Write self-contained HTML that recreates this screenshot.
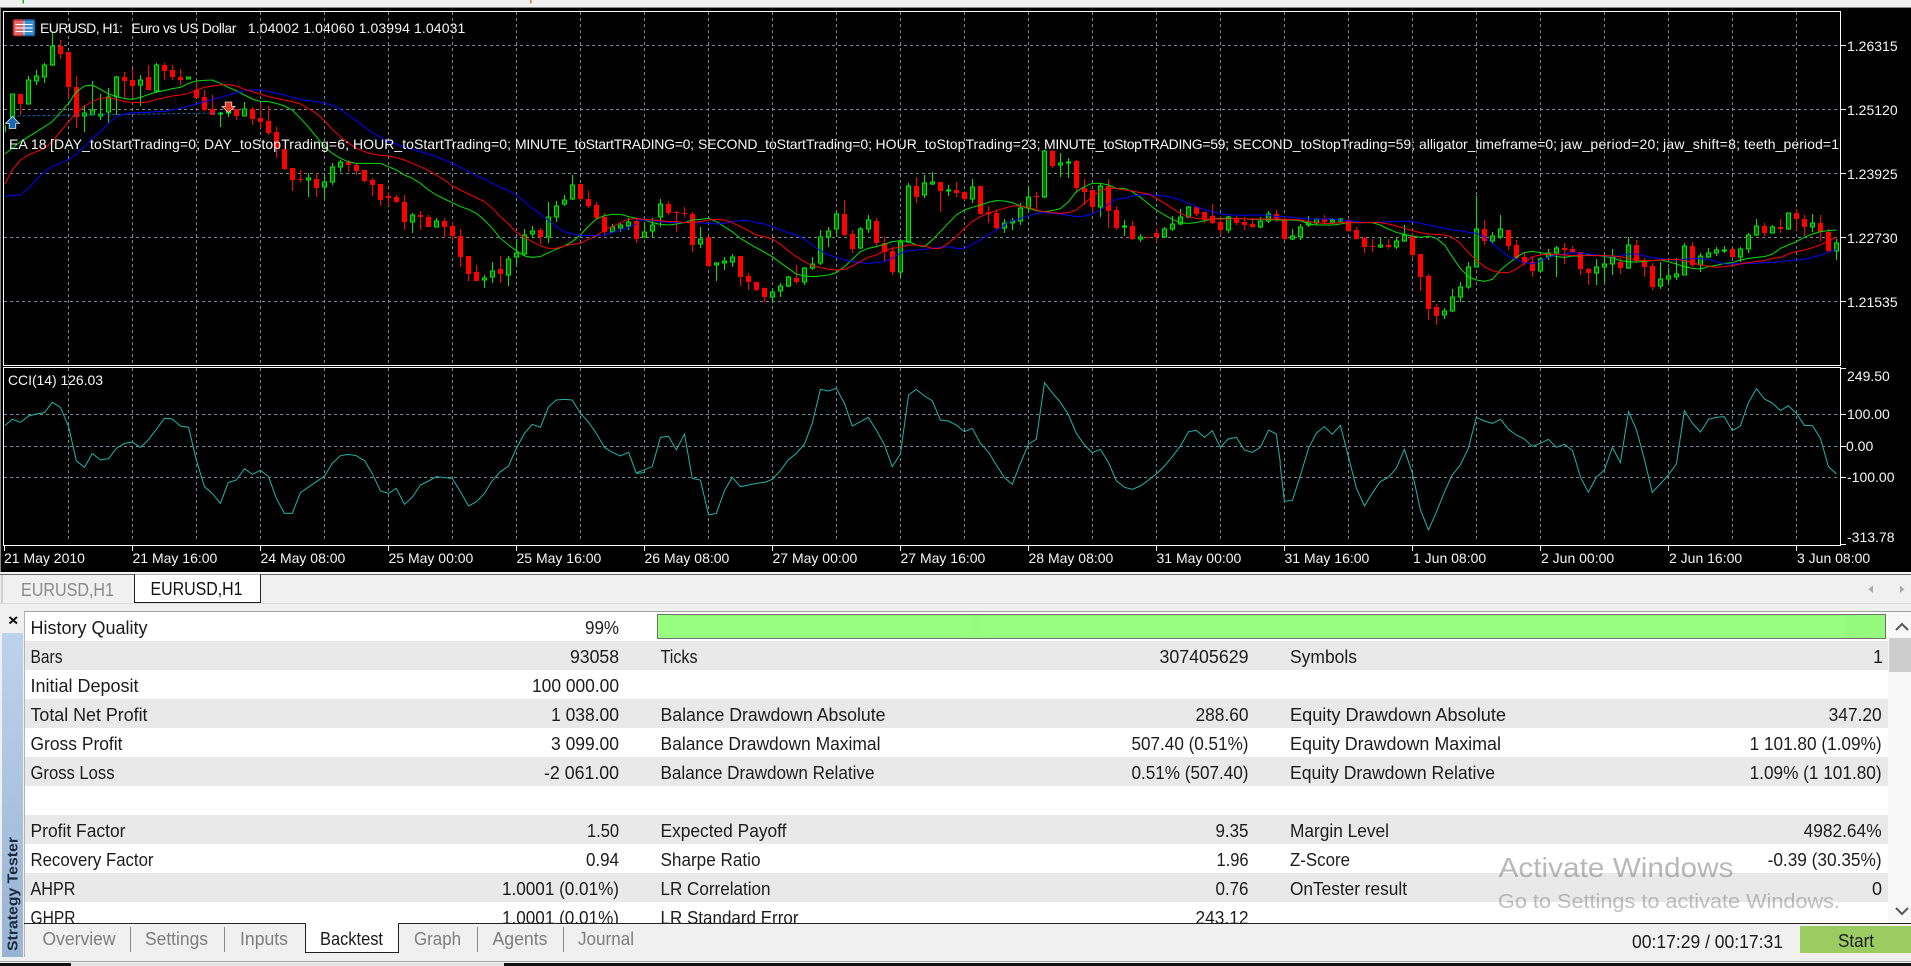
<!DOCTYPE html>
<html lang="en"><head><meta charset="utf-8"><title>EURUSD,H1 Strategy Tester</title>
<style>
html,body{margin:0;padding:0;background:#000;width:1911px;height:966px;overflow:hidden}
svg{display:block;filter:blur(.35px)}
text{font-family:"Liberation Sans",sans-serif;white-space:pre}
.c{font-size:14px;fill:#f6f6f6}
.t{font-size:18px;fill:#1c1c1c}
.e{text-anchor:end}
.g{font-size:18px;fill:#7d7d7d}
.l{fill:none;stroke-width:1;vector-effect:non-scaling-stroke}
</style></head><body>
<svg width="1911" height="966" viewBox="0 0 1911 966" xmlns="http://www.w3.org/2000/svg">
<rect width="1911" height="966" fill="#000"/>
<!-- top strip -->
<rect width="1911" height="7.5" fill="#f0f0f0"/>
<rect y="7" width="1911" height="1" fill="#888"/>
<rect x="22.5" width="1.5" height="3.5" fill="#20b020"/>
<rect x="530" width="1.5" height="3.5" fill="#c08030"/>
<rect x="0" y="8" width="1" height="564" fill="#888"/>

<!-- grid -->
<g stroke="#778899" stroke-width="1" stroke-dasharray="3 3" fill="none">
<path d="M4 45.5H1840M4 109.5H1840M4 173.5H1840M4 237.5H1840M4 301.5H1840"/>
<path d="M4 414.5H1840M4 446.5H1840M4 477.5H1840"/>
<path d="M68.5 12V365M132.5 12V365M196.5 12V365M260.5 12V365M324.5 12V365M388.5 12V365M452.5 12V365M516.5 12V365M580.5 12V365M644.5 12V365M708.5 12V365M772.5 12V365M836.5 12V365M900.5 12V365M964.5 12V365M1028.5 12V365M1092.5 12V365M1156.5 12V365M1220.5 12V365M1284.5 12V365M1348.5 12V365M1412.5 12V365M1476.5 12V365M1540.5 12V365M1604.5 12V365M1668.5 12V365M1732.5 12V365M1796.5 12V365"/>
<path d="M68.5 368V542M132.5 368V542M196.5 368V542M260.5 368V542M324.5 368V542M388.5 368V542M452.5 368V542M516.5 368V542M580.5 368V542M644.5 368V542M708.5 368V542M772.5 368V542M836.5 368V542M900.5 368V542M964.5 368V542M1028.5 368V542M1092.5 368V542M1156.5 368V542M1220.5 368V542M1284.5 368V542M1348.5 368V542M1412.5 368V542M1476.5 368V542M1540.5 368V542M1604.5 368V542M1668.5 368V542M1732.5 368V542M1796.5 368V542"/>
</g>

<!-- red wicks -->
<path fill="none" stroke="#f00" stroke-width="1" d="M20.5 94V115M60.5 40V59M68.5 52V98M76.5 76V128M124.5 72V98M132.5 69V98M148.5 65V90M164.5 63V80M172.5 65V80M180.5 69V86M196.5 82V98M204.5 90V111M212.5 95V115M236.5 109V120M252.5 107V125M260.5 103V128M268.5 106V135M276.5 127V158M284.5 149V170M292.5 168V191M300.5 170V182M316.5 173V197M348.5 160V172M356.5 163V175M364.5 170V182M372.5 178V196M380.5 184V206M388.5 192V206M396.5 195V203M404.5 195V230M420.5 211V230M428.5 215V227M444.5 218V238M452.5 222V241M460.5 229V267M468.5 256V281M476.5 265V281M500.5 256V283M540.5 228V244M580.5 184V200M588.5 191V208M596.5 202V220M604.5 213V235M636.5 218V243M668.5 201V215M676.5 211V232M684.5 207V217M692.5 212V252M708.5 237V267M740.5 256V286M748.5 273V290M756.5 282V291M764.5 288V302M796.5 265V284M844.5 200V236M852.5 230V253M876.5 218V246M884.5 237V262M892.5 247V275M916.5 177V203M940.5 182V212M956.5 182V197M964.5 191V200M980.5 186V215M988.5 206V223M996.5 211V230M1036.5 192V209M1052.5 150V168M1076.5 160V193M1084.5 179V205M1092.5 190V212M1108.5 179V228M1116.5 206V230M1132.5 221V240M1156.5 228V242M1196.5 207V216M1204.5 212V223M1212.5 204V224M1220.5 216V235M1236.5 216V225M1244.5 217V230M1252.5 218V228M1276.5 210V222M1284.5 216V240M1324.5 215V224M1348.5 218V232M1356.5 227V239M1364.5 237V253M1372.5 239V252M1388.5 239V249M1412.5 233V259M1420.5 254V291M1428.5 274V320M1436.5 304V325M1484.5 220V245M1508.5 230V250M1516.5 240V259M1524.5 253V265M1532.5 257V277M1564.5 243V264M1572.5 246V253M1580.5 252V275M1588.5 268V285M1620.5 258V274M1636.5 240V263M1644.5 258V277M1652.5 263V290M1692.5 242V267M1732.5 249V258M1764.5 223V236M1780.5 219V233M1796.5 209V230M1804.5 215V236M1820.5 215V241M1828.5 229V252"/>
<!-- red bodies -->
<path fill="none" stroke="#f00" stroke-width="5" d="M20.5 94V104M60.5 46V54M68.5 52V87M76.5 87V117M124.5 77V81M132.5 80V86M148.5 77V90M164.5 65V71M172.5 70V77M180.5 77V80M196.5 90V98M204.5 97V110M212.5 109V115M236.5 109V116M252.5 109V119M260.5 118V122M268.5 121V133M276.5 132V149M284.5 149V169M292.5 168V180M300.5 179V180M316.5 179V188M348.5 162V165M356.5 165V171M364.5 170V181M372.5 180V185M380.5 184V200M388.5 196V198M396.5 197V202M404.5 202V222M420.5 215V217M428.5 217V227M444.5 221V227M452.5 226V236M460.5 236V257M468.5 256V274M476.5 272V281M500.5 269V274M540.5 230V237M580.5 184V199M588.5 199V206M596.5 205V218M604.5 217V232M636.5 221V239M668.5 204V213M676.5 212V213M684.5 213V214M692.5 214V245M708.5 237V266M740.5 256V277M748.5 276V282M756.5 282V290M764.5 288V297M796.5 278V282M844.5 214V235M852.5 234V249M876.5 221V243M884.5 243V252M892.5 251V272M916.5 186V197M940.5 182V191M956.5 190V193M964.5 192V199M980.5 186V214M988.5 212V214M996.5 213V228M1036.5 196V197M1052.5 151V166M1076.5 161V188M1084.5 188V192M1092.5 190V207M1108.5 186V211M1116.5 210V228M1132.5 226V239M1148.5 237V238M1156.5 233V237M1196.5 207V214M1204.5 212V219M1212.5 216V223M1220.5 222V230M1236.5 219V223M1244.5 222V225M1252.5 224V227M1276.5 214V220M1284.5 220V239M1324.5 219V222M1348.5 220V231M1356.5 230V239M1364.5 238V247M1372.5 246V247M1388.5 245V247M1412.5 236V255M1420.5 254V277M1428.5 276V309M1436.5 307V316M1484.5 229V241M1508.5 230V246M1516.5 245V258M1524.5 257V263M1532.5 262V271M1564.5 248V250M1572.5 249V252M1580.5 252V269M1588.5 269V273M1620.5 262V268M1636.5 245V261M1644.5 261V267M1652.5 266V287M1692.5 246V265M1732.5 249V257M1764.5 226V233M1780.5 227V229M1796.5 213V219M1804.5 219V227M1820.5 223V232M1828.5 232V251"/>
<!-- green wicks -->
<path fill="none" stroke="#00e800" stroke-width="1" d="M12.5 94V118M28.5 76V104M36.5 70V85M44.5 63V83M52.5 33V66M84.5 105V132M92.5 81V115M100.5 94V120M108.5 88V123M116.5 76V115M140.5 75V106M156.5 63V93M220.5 112V127M228.5 107V117M244.5 102V116M308.5 173V197M324.5 175V199M332.5 163V185M340.5 160V172M412.5 213V233M436.5 218V227M484.5 275V288M492.5 262V283M508.5 256V286M516.5 239V265M524.5 229V256M532.5 226V238M548.5 202V243M556.5 201V222M564.5 195V206M572.5 175V200M612.5 224V233M620.5 223V232M628.5 218V230M644.5 222V238M652.5 218V237M660.5 199V227M700.5 227V248M716.5 262V281M724.5 257V270M732.5 254V267M772.5 288V302M780.5 283V297M788.5 276V287M804.5 267V285M812.5 257V270M820.5 230V265M828.5 227V247M836.5 211V237M860.5 227V249M868.5 215V233M900.5 239V277M908.5 183V243M924.5 175V198M932.5 172V185M948.5 185V196M972.5 179V203M1004.5 219V233M1012.5 218V230M1020.5 203V225M1028.5 186V212M1044.5 150V198M1060.5 153V177M1068.5 158V178M1100.5 183V217M1124.5 220V236M1140.5 234V242M1164.5 227V237M1172.5 216V231M1180.5 209V225M1188.5 206V218M1228.5 216V233M1260.5 217V228M1268.5 211V223M1292.5 229V240M1300.5 224V240M1308.5 216V227M1316.5 218V225M1332.5 218V223M1340.5 218V222M1380.5 237V248M1396.5 237V249M1404.5 225V242M1444.5 308V319M1452.5 289V312M1460.5 282V302M1468.5 262V289M1476.5 196V267M1492.5 232V243M1500.5 215V239M1540.5 257V272M1548.5 249V260M1556.5 246V277M1596.5 259V285M1604.5 255V283M1612.5 249V275M1628.5 237V269M1660.5 262V289M1668.5 268V285M1676.5 258V280M1684.5 243V275M1700.5 253V272M1708.5 248V258M1716.5 247V256M1724.5 246V253M1740.5 247V262M1748.5 233V253M1756.5 219V236M1772.5 225V233M1788.5 213V230M1812.5 214V232M1836.5 239V260M5.5 125V132"/>
<!-- green bodies -->
<path fill="#006a00" stroke="#00e800" stroke-width="1" d="M10.5 94h4v23h-4zM26.5 80h4v24h-4zM34.5 76h4v5h-4zM42.5 65h4v12h-4zM50.5 46h4v19h-4zM82.5 113h4v3h-4zM90.5 110h4v5h-4zM98.5 114h4v2h-4zM106.5 97h4v15h-4zM114.5 77h4v20h-4zM138.5 80h4v5h-4zM154.5 65h4v26h-4zM186.5 77h4v2h-4zM218.5 113h4v1h-4zM226.5 110h4v3h-4zM242.5 109h4v7h-4zM306.5 178h4v2h-4zM322.5 182h4v5h-4zM330.5 167h4v15h-4zM338.5 162h4v5h-4zM410.5 215h4v7h-4zM434.5 221h4v6h-4zM482.5 278h4v2h-4zM490.5 271h4v6h-4zM506.5 259h4v16h-4zM514.5 253h4v4h-4zM522.5 235h4v19h-4zM530.5 231h4v3h-4zM546.5 217h4v20h-4zM554.5 206h4v11h-4zM562.5 200h4v4h-4zM570.5 185h4v14h-4zM610.5 227h4v5h-4zM618.5 225h4v3h-4zM626.5 222h4v4h-4zM642.5 232h4v5h-4zM650.5 225h4v6h-4zM658.5 204h4v13h-4zM698.5 239h4v5h-4zM714.5 263h4v2h-4zM722.5 261h4v2h-4zM730.5 257h4v5h-4zM770.5 292h4v5h-4zM778.5 286h4v5h-4zM786.5 277h4v9h-4zM802.5 268h4v14h-4zM810.5 264h4v4h-4zM818.5 237h4v26h-4zM826.5 231h4v6h-4zM834.5 214h4v15h-4zM858.5 229h4v19h-4zM866.5 220h4v9h-4zM898.5 242h4v30h-4zM906.5 186h4v56h-4zM922.5 183h4v12h-4zM930.5 182h4v2h-4zM946.5 190h4v1h-4zM970.5 187h4v12h-4zM1002.5 223h4v5h-4zM1010.5 221h4v2h-4zM1018.5 208h4v13h-4zM1026.5 197h4v11h-4zM1042.5 151h4v46h-4zM1058.5 163h4v2h-4zM1066.5 162h4v1h-4zM1098.5 186h4v21h-4zM1122.5 226h4v1h-4zM1138.5 237h4v2h-4zM1162.5 229h4v8h-4zM1170.5 224h4v5h-4zM1178.5 217h4v7h-4zM1186.5 207h4v10h-4zM1226.5 217h4v13h-4zM1258.5 221h4v6h-4zM1266.5 214h4v7h-4zM1290.5 236h4v3h-4zM1298.5 227h4v10h-4zM1306.5 222h4v3h-4zM1314.5 219h4v4h-4zM1330.5 220h4v2h-4zM1338.5 219h4v2h-4zM1378.5 245h4v2h-4zM1394.5 241h4v6h-4zM1402.5 235h4v6h-4zM1442.5 311h4v4h-4zM1450.5 297h4v14h-4zM1458.5 287h4v10h-4zM1466.5 267h4v20h-4zM1474.5 229h4v38h-4zM1490.5 236h4v5h-4zM1498.5 229h4v8h-4zM1538.5 259h4v12h-4zM1546.5 253h4v4h-4zM1554.5 248h4v5h-4zM1594.5 267h4v6h-4zM1602.5 264h4v3h-4zM1610.5 257h4v7h-4zM1626.5 245h4v23h-4zM1658.5 279h4v7h-4zM1666.5 276h4v3h-4zM1674.5 274h4v3h-4zM1682.5 246h4v29h-4zM1698.5 256h4v9h-4zM1706.5 253h4v4h-4zM1714.5 250h4v3h-4zM1722.5 250h4v1h-4zM1738.5 249h4v8h-4zM1746.5 235h4v14h-4zM1754.5 226h4v9h-4zM1770.5 227h4v6h-4zM1786.5 213h4v16h-4zM1810.5 223h4v4h-4zM1834.5 243h4v8h-4z"/>

<!-- trade link -->
<path d="M12.5 116L220 113" fill="none" stroke="#1565a8" stroke-width="1" stroke-dasharray="3 2"/>

<!-- moving averages section 1 -->
<g transform="scale(.40816,.33333)">
<polyline class="l" stroke="#00e000" points="12,462 50,425 90,395 128,365 168,310 187,275 207,258 226,255 246,268 266,282 285,290 305,296 324,298 344,292 363,284 383,276 403,272 422,266 442,262 462,250 481,243 500,241 520,240 540,250 559,262 579,272 599,285 618,297 638,304 658,305 677,310 697,318 716,330 736,355 755,380 775,410 795,440 814,460 834,475 853,485 873,490 893,490 912,490 932,490 952,500 971,510 991,525 1010,535 1030,550 1050,570 1069,585 1089,597 1108,608 1128,620 1148,628 1167,640 1187,660 1206,685 1226,715 1246,735 1265,752 1285,768 1304,772 1324,770 1344,758 1363,748 1383,738 1402,725 1422,705 1441,680 1461,657 1481,647 1500,643 1520,643 1540,650 1559,655"/>
<polyline class="l" stroke="#0000ff" points="12,590 30,586 50,585 70,565 89,540 109,515 128,500 148,490 168,478 187,462 207,440 226,415 246,395 266,370 285,350 305,342 324,338 344,337 363,337 383,335 403,335 422,330 442,325 462,318 481,312 501,305 520,298 540,292 559,285 579,278 599,272 618,270 638,270 658,274 677,280 697,285 716,292 736,298 755,302 775,305 795,310 814,315 834,328 853,345 873,362 893,380 912,398 932,412 952,425 971,432 991,442 1010,448 1030,455 1050,462 1069,470 1089,480 1108,490 1128,502 1148,515 1167,527 1187,537 1206,550 1226,562 1246,572 1265,585 1285,605 1304,625 1324,643 1344,662 1363,680 1383,695 1402,702 1422,706 1441,707 1461,707 1481,705 1500,698 1520,690 1540,682 1559,672"/>
<polyline class="l" stroke="#f00" points="12,552 30,510 50,480 70,465 89,455 109,445 128,425 148,395 168,365 187,340 207,318 226,305 246,295 266,293 285,298 305,305 324,307 344,308 363,306 383,298 403,293 422,288 442,285 462,280 481,270 501,262 520,258 540,255 559,254 579,258 599,268 618,275 638,282 658,290 677,295 697,300 716,305 736,312 755,325 775,340 795,362 814,388 834,410 853,428 873,445 893,455 912,462 932,466 952,468 971,473 991,480 1010,490 1030,500 1050,512 1069,525 1089,540 1108,558 1128,570 1148,582 1167,593 1187,605 1206,625 1226,650 1246,672 1265,697 1285,712 1304,725 1324,737 1344,745 1363,745 1383,738 1402,733 1422,730 1441,718 1461,708 1481,690 1500,680 1520,668 1540,658 1559,655"/>
</g>
<!-- section 2 -->
<g transform="translate(640,0) scale(.40816,.33333)">
<polyline class="l" stroke="#00e000" points="-8,655 11,660 30,668 50,673 70,675 89,672 109,668 128,660 148,658 168,655 187,665 207,680 226,695 246,715 266,730 285,743 305,757 324,770 344,788 363,805 383,822 403,828 422,830 442,828 462,825 481,818 501,800 520,778 540,755 559,745 579,740 599,733 618,725 638,722 658,725 677,735 697,740 716,720 736,695 755,670 775,645 795,630 814,622 834,615 853,607 873,602 893,603 912,608 932,618 952,625 971,632 991,635 1010,632 1030,626 1050,605 1069,575 1089,560 1108,550 1128,550 1148,555 1167,565 1187,565 1206,575 1226,592 1246,612 1265,630 1285,645 1304,658 1324,668 1344,670 1363,668 1383,662 1402,657 1422,655 1441,655 1461,655 1481,657 1500,658 1520,658 1540,658 1559,660"/>
<polyline class="l" stroke="#0000ff" points="-8,660 11,660 30,662 50,664 70,667 89,668 109,668 128,668 148,668 168,670 187,672 207,670 226,665 246,662 266,662 285,668 305,672 324,680 344,690 363,698 383,705 403,718 422,735 442,752 462,765 481,772 501,780 520,785 540,788 559,790 579,788 599,785 618,775 638,760 658,752 677,750 697,748 716,745 736,742 755,740 775,745 795,745 814,733 834,720 853,705 873,690 893,675 912,662 932,655 952,648 971,640 991,638 1010,640 1030,642 1050,646 1069,650 1089,648 1108,642 1128,630 1148,612 1167,598 1187,595 1206,588 1226,585 1246,583 1265,586 1285,588 1304,592 1324,600 1344,610 1363,620 1383,630 1402,635 1422,642 1441,645 1461,645 1481,646 1500,645 1520,645 1540,645 1559,650"/>
<polyline class="l" stroke="#f00" points="-8,655 11,658 30,660 50,662 70,665 89,665 109,668 128,668 148,665 168,660 187,658 207,660 226,668 246,680 266,692 285,705 305,710 324,717 344,733 363,752 383,770 403,785 422,797 442,803 462,808 481,810 501,808 520,798 540,785 559,772 579,765 599,752 618,745 638,742 658,735 677,735 697,738 716,745 736,745 755,730 775,710 795,685 814,665 834,650 853,640 873,632 893,625 912,618 932,618 952,622 971,630 991,635 1010,638 1030,640 1050,638 1069,630 1089,610 1108,590 1128,572 1148,565 1167,565 1187,570 1206,573 1226,578 1246,582 1265,595 1285,610 1304,625 1324,640 1344,650 1363,655 1383,658 1402,657 1422,657 1441,657 1461,655 1481,657 1500,657 1520,657 1540,657 1559,658"/>
</g>
<!-- section 3 -->
<g transform="translate(1280,0) scale(.40241,.33333)">
<polyline class="l" stroke="#00e000" points="-9,660 11,660 31,660 51,662 71,672 90,675 110,675 130,675 150,672 170,668 190,668 210,668 229,668 249,675 269,687 289,697 309,703 329,708 349,712 369,708 389,715 409,735 428,770 448,805 468,830 488,840 508,844 528,838 548,810 568,790 587,772 607,758 627,754 647,758 667,762 687,770 707,772 727,768 747,768 766,765 786,765 806,770 826,772 846,782 866,785 886,786 906,784 925,782 945,780 965,785 985,792 1005,800 1025,805 1045,807 1065,800 1084,796 1104,790 1124,788 1144,780 1164,775 1184,772 1204,770 1224,762 1244,745 1263,735 1283,725 1303,712 1323,702 1343,695 1363,692 1383,690"/>
<polyline class="l" stroke="#0000ff" points="-9,650 11,650 31,652 51,655 71,657 90,657 110,657 130,657 150,660 170,662 190,665 210,667 229,667 249,667 269,665 289,665 309,663 329,665 349,670 369,675 389,680 409,685 428,690 448,692 468,697 488,700 508,710 528,730 548,750 568,770 587,778 607,788 627,792 647,782 667,772 687,765 707,762 727,758 747,760 766,762 786,765 806,768 826,770 846,768 866,762 886,762 906,768 925,773 945,776 965,778 985,780 1005,778 1025,776 1045,776 1065,778 1084,785 1104,792 1124,792 1144,790 1164,790 1184,790 1204,788 1224,788 1244,785 1263,782 1283,780 1303,778 1323,772 1343,765 1363,757 1383,748"/>
<polyline class="l" stroke="#f00" points="-9,657 11,658 31,658 51,660 71,665 90,668 110,670 130,670 150,668 170,668 190,668 210,668 229,667 249,668 269,672 289,678 309,685 329,692 349,698 369,702 389,703 409,705 428,712 448,730 468,758 488,780 508,800 528,812 548,818 568,818 587,808 607,790 627,770 647,765 667,762 687,763 707,765 727,766 747,767 766,767 786,767 806,767 826,768 846,770 866,775 886,780 906,782 925,782 945,780 965,778 985,778 1005,782 1025,788 1045,795 1065,798 1084,802 1104,800 1124,797 1144,792 1164,788 1184,785 1204,782 1224,775 1244,772 1263,762 1283,755 1303,750 1323,743 1343,735 1363,722 1383,712"/>
</g>

<!-- CCI line -->
<g transform="translate(0,360) scale(.40816,.33333)">
<polyline class="l" stroke="#20b2aa" points="12,197 30,178 50,187 70,168 89,162 109,158 128,127 148,142 168,200 187,302 207,322 226,280 246,300 266,296 285,265 305,250 324,246 344,262 363,240 383,208 403,175 422,177 442,198 462,202 481,300 501,380 520,400 540,430 559,368 579,360 599,326 618,343 638,331 658,350 677,415 697,460 716,460 736,398 755,382 775,365 795,348 814,310 834,287 853,283 873,287 893,302 912,340 932,393 952,400 971,385 991,433 1010,412 1030,375 1050,363 1069,350 1089,353 1108,355 1128,395 1148,438 1167,425 1187,400 1206,362 1226,335 1246,318 1265,265 1285,220 1304,193 1324,202 1344,140 1363,120 1383,118 1402,120 1422,160 1441,185 1461,220 1481,262 1500,277 1520,288 1540,277 1559,340 1579,338"/>
</g>
<g transform="translate(640,360) scale(.40816,.33333)">
<polyline class="l" stroke="#20b2aa" points="-8,338 11,329 30,320 50,232 70,229 89,270 109,222 128,355 148,360 168,465 187,460 207,392 226,352 246,380 266,375 285,370 305,367 324,358 344,332 363,300 383,280 403,252 422,190 442,88 462,93 481,85 501,130 520,198 540,185 559,172 579,210 599,255 618,320 638,282 658,105 677,88 697,108 716,122 736,180 755,183 775,195 795,215 814,205 834,250 853,275 873,315 893,353 912,373 932,310 952,252 971,238 991,68 1010,98 1030,127 1050,165 1069,220 1089,255 1108,278 1128,268 1148,308 1167,362 1187,382 1206,388 1226,378 1246,360 1265,342 1285,318 1304,290 1324,258 1344,215 1363,211 1383,232 1402,212 1422,262 1441,237 1461,232 1481,270 1500,277 1520,262 1540,210 1559,222 1569,310"/>
</g>
<g transform="translate(1280,360) scale(.40241,.33333)">
<polyline class="l" stroke="#20b2aa" points="0,310 11,424 31,421 51,345 71,265 90,220 110,200 130,223 150,196 170,290 190,385 210,438 229,400 249,365 269,352 289,325 309,268 329,340 349,450 369,510 389,455 409,395 428,345 448,315 468,265 488,172 508,183 528,190 548,178 568,208 587,225 607,237 627,259 647,250 667,238 687,262 707,253 727,272 747,352 766,397 786,352 806,330 826,262 846,308 866,155 886,210 906,300 925,397 945,372 965,345 985,312 1005,152 1025,190 1045,216 1065,178 1084,172 1104,170 1124,212 1144,198 1164,128 1184,86 1204,117 1224,130 1244,152 1263,137 1283,160 1303,196 1323,197 1343,235 1363,320 1383,342"/>
</g>

<!-- arrows -->
<path d="M12.5 116.5L19.5 123.5H15.800V128.500H9.200V123.500H5.500Z" fill="#1668b4" stroke="#e8e8e8" stroke-width=".8"/>
<path d="M228.5 112.500L235 106.500H231.800V102H225.200V106.500H222Z" fill="#e03a20" stroke="#e8d8d0" stroke-width=".8"/>

<!-- window borders -->
<path d="M3.5 11.5H1840.5V365.5H3.5Z" fill="none" stroke="#fff" stroke-width="1"/>
<path d="M3.5 367.5H1840.5V545.5H3.5Z" fill="none" stroke="#fff" stroke-width="1"/>
<!-- ticks -->
<path stroke="#fff" stroke-width="1" fill="none" d="M1841 45.5h5M1841 109.5h5M1841 173.5h5M1841 237.5h5M1841 301.5h5M1841 368.5h5M1841 414.5h5M1841 446.5h5M1841 477.5h5M1841 544.5h5M4.5 546v5M132.5 546v5M260.5 546v5M388.5 546v5M516.5 546v5M644.5 546v5M772.5 546v5M900.5 546v5M1028.5 546v5M1156.5 546v5M1284.5 546v5M1412.5 546v5M1540.5 546v5M1668.5 546v5M1796.5 546v5"/>

<!-- flag icon -->
<rect x="13" y="19.5" width="22" height="16.5" rx="2" fill="#fff"/>
<path d="M24 20H15q-1.500 0-1.500 1.500V34q0 1.500 1.500 1.500H24Z" fill="#e06a6a" stroke="#cc3030" stroke-width="1.500"/>
<path d="M24 20H33q1.500 0 1.500 1.500V34q0 1.500-1.500 1.500H24Z" fill="#3f8fcc" stroke="#1565a8" stroke-width="1.500"/>
<path d="M15.500 24.500H32.500M15.500 28H32.500M15.500 31.500H32.500" stroke="#fff" stroke-width="1"/>
<path d="M24 21V35" stroke="#fff" stroke-width="1"/>

<!-- chart labels -->
<text class="c" x="40" y="33" textLength="83" lengthAdjust="spacing">EURUSD, H1:</text>
<text class="c" x="131.400" y="33" textLength="105" lengthAdjust="spacing">Euro vs US Dollar</text>
<text class="c" x="247.800" y="33" textLength="217.500" lengthAdjust="spacing">1.04002 1.04060 1.03994 1.04031</text>
<text class="c" x="9" y="149" textLength="37.500" lengthAdjust="spacing">EA 18</text>
<text class="c" x="50" y="149" textLength="150" lengthAdjust="spacing">[DAY_toStartTrading=0;</text>
<text class="c" x="204" y="149" textLength="145" lengthAdjust="spacing">DAY_toStopTrading=6;</text>
<text class="c" x="353" y="149" textLength="158" lengthAdjust="spacing">HOUR_toStartTrading=0;</text>
<text class="c" x="515" y="149" textLength="179" lengthAdjust="spacing">MINUTE_toStartTRADING=0;</text>
<text class="c" x="698" y="149" textLength="174" lengthAdjust="spacing">SECOND_toStartTrading=0;</text>
<text class="c" x="875.500" y="149" textLength="165" lengthAdjust="spacing">HOUR_toStopTrading=23;</text>
<text class="c" x="1044" y="149" textLength="185" lengthAdjust="spacing">MINUTE_toStopTRADING=59;</text>
<text class="c" x="1233" y="149" textLength="182" lengthAdjust="spacing">SECOND_toStopTrading=59;</text>
<text class="c" x="1419" y="149" textLength="138" lengthAdjust="spacing">alligator_timeframe=0;</text>
<text class="c" x="1560.500" y="149" textLength="99" lengthAdjust="spacing">jaw_period=20;</text>
<text class="c" x="1663" y="149" textLength="77" lengthAdjust="spacing">jaw_shift=8;</text>
<text class="c" x="1744" y="149" textLength="95" lengthAdjust="spacing">teeth_period=1</text>
<text class="c" x="8" y="385" textLength="95">CCI(14) 126.03</text>
<text class="c" x="1847" y="51">1.26315</text>
<text class="c" x="1847" y="115">1.25120</text>
<text class="c" x="1847" y="179">1.23925</text>
<text class="c" x="1847" y="243">1.22730</text>
<text class="c" x="1847" y="307">1.21535</text>
<text class="c" x="1847" y="381">249.50</text>
<text class="c" x="1847" y="419">100.00</text>
<text class="c" x="1846" y="451">0.00</text>
<text class="c" x="1847" y="482">-100.00</text>
<text class="c" x="1847" y="542">-313.78</text>
<g class="tm">
<text class="c" x="4" y="563">21 May 2010</text>
<text class="c" x="132.500" y="563">21 May 16:00</text>
<text class="c" x="260.500" y="563">24 May 08:00</text>
<text class="c" x="388.500" y="563">25 May 00:00</text>
<text class="c" x="516.500" y="563">25 May 16:00</text>
<text class="c" x="644.500" y="563">26 May 08:00</text>
<text class="c" x="772.500" y="563">27 May 00:00</text>
<text class="c" x="900.500" y="563">27 May 16:00</text>
<text class="c" x="1028.500" y="563">28 May 08:00</text>
<text class="c" x="1156.500" y="563">31 May 00:00</text>
<text class="c" x="1284.500" y="563">31 May 16:00</text>
<text class="c" x="1413" y="563">1 Jun 08:00</text>
<text class="c" x="1541" y="563">2 Jun 00:00</text>
<text class="c" x="1669" y="563">2 Jun 16:00</text>
<text class="c" x="1797" y="563">3 Jun 08:00</text>
</g>

<!-- lower area background -->
<rect x="0" y="572" width="1911" height="394" fill="#f0f0f0"/>
<rect x="0" y="572" width="1911" height="1.500" fill="#f4f4f4"/>
<rect x="0" y="574" width="1911" height="1" fill="#666"/>
<rect x="0" y="603" width="1911" height="1" fill="#dcdcdc"/>
<!-- chart tabs -->
<path d="M134.500 574.500V602.500H260.500V574.500" fill="#fff" stroke="#222" stroke-width="1"/>
<rect x="1.500" y="575" width="1" height="28" fill="#b0b0b0"/>
<text x="21" y="596" font-size="18" fill="#8a8a8a" textLength="93" lengthAdjust="spacingAndGlyphs">EURUSD,H1</text>
<text x="150.500" y="595" font-size="18" fill="#111" textLength="92" lengthAdjust="spacingAndGlyphs">EURUSD,H1</text>
<path d="M1873 585.500V593L1868.500 589.200Z" fill="#aaa"/>
<path d="M1900 585.500V593L1904.500 589.200Z" fill="#aaa"/>

<!-- tester panel -->
<rect x="24" y="612" width="1864" height="311" fill="#fff"/>
<rect x="24" y="611" width="1887" height="1" fill="#a0a0a0"/>
<rect x="24" y="612" width="1" height="311" fill="#b4b4b4"/>
<path d="M9.500 617L17 623.500M17 617L9.500 623.500" stroke="#111" stroke-width="2" fill="none"/>
<defs><linearGradient id="sb" x1="0" y1="0" x2="0" y2="1"><stop offset="0" stop-color="#bdd3ec"/><stop offset="1" stop-color="#98b4d4"/></linearGradient>
<clipPath id="tc"><rect x="24" y="612" width="1864" height="311"/></clipPath></defs>
<rect x="2" y="633" width="21" height="324" fill="url(#sb)"/>
<text transform="translate(17.500,951) rotate(-90)" font-size="15" font-weight="bold" fill="#1a2a3a" textLength="114" lengthAdjust="spacingAndGlyphs">Strategy Tester</text>

<g clip-path="url(#tc)">
<g fill="#e9e9e9">
<rect x="25" y="641" width="1863" height="29"/>
<rect x="25" y="699" width="1863" height="29"/>
<rect x="25" y="757" width="1863" height="29"/>
<rect x="25" y="815" width="1863" height="29"/>
<rect x="25" y="873" width="1863" height="29"/>
</g>
<rect x="657.500" y="614.500" width="1228" height="24" fill="#98fe80" stroke="#707070" stroke-width="1"/>
<rect x="970" y="615" width="12" height="23" fill="#96fb7f"/>
<rect x="1845" y="615" width="40" height="23" fill="#95f97e"/>

<g>
<text class="t" x="30.500" y="634" textLength="117" lengthAdjust="spacingAndGlyphs">History Quality</text>
<text class="t" x="30.500" y="663" textLength="32" lengthAdjust="spacingAndGlyphs">Bars</text>
<text class="t" x="30.500" y="692" textLength="108" lengthAdjust="spacingAndGlyphs">Initial Deposit</text>
<text class="t" x="30.500" y="721" textLength="117" lengthAdjust="spacingAndGlyphs">Total Net Profit</text>
<text class="t" x="30.500" y="750" textLength="92" lengthAdjust="spacingAndGlyphs">Gross Profit</text>
<text class="t" x="30.500" y="779" textLength="84" lengthAdjust="spacingAndGlyphs">Gross Loss</text>
<text class="t" x="30.500" y="837" textLength="95" lengthAdjust="spacingAndGlyphs">Profit Factor</text>
<text class="t" x="30.500" y="866" textLength="123" lengthAdjust="spacingAndGlyphs">Recovery Factor</text>
<text class="t" x="30.500" y="895" textLength="45" lengthAdjust="spacingAndGlyphs">AHPR</text>
<text class="t" x="30.500" y="924" textLength="45" lengthAdjust="spacingAndGlyphs">GHPR</text>

<text class="t" x="585" y="634" textLength="34" lengthAdjust="spacingAndGlyphs">99%</text>
<text class="t" x="570" y="663" textLength="49" lengthAdjust="spacingAndGlyphs">93058</text>
<text class="t" x="532" y="692" textLength="87" lengthAdjust="spacingAndGlyphs">100 000.00</text>
<text class="t" x="551" y="721" textLength="68" lengthAdjust="spacingAndGlyphs">1 038.00</text>
<text class="t" x="551" y="750" textLength="68" lengthAdjust="spacingAndGlyphs">3 099.00</text>
<text class="t" x="544" y="779" textLength="75" lengthAdjust="spacingAndGlyphs">-2 061.00</text>
<text class="t" x="587" y="837" textLength="32" lengthAdjust="spacingAndGlyphs">1.50</text>
<text class="t" x="586" y="866" textLength="33" lengthAdjust="spacingAndGlyphs">0.94</text>
<text class="t" x="502" y="895" textLength="117" lengthAdjust="spacingAndGlyphs">1.0001 (0.01%)</text>
<text class="t" x="502" y="924" textLength="117" lengthAdjust="spacingAndGlyphs">1.0001 (0.01%)</text>

<text class="t" x="660.500" y="663" textLength="37" lengthAdjust="spacingAndGlyphs">Ticks</text>
<text class="t" x="660.500" y="721" textLength="225" lengthAdjust="spacingAndGlyphs">Balance Drawdown Absolute</text>
<text class="t" x="660.500" y="750" textLength="220" lengthAdjust="spacingAndGlyphs">Balance Drawdown Maximal</text>
<text class="t" x="660.500" y="779" textLength="214" lengthAdjust="spacingAndGlyphs">Balance Drawdown Relative</text>
<text class="t" x="660.500" y="837" textLength="126" lengthAdjust="spacingAndGlyphs">Expected Payoff</text>
<text class="t" x="660.500" y="866" textLength="100" lengthAdjust="spacingAndGlyphs">Sharpe Ratio</text>
<text class="t" x="660.500" y="895" textLength="110" lengthAdjust="spacingAndGlyphs">LR Correlation</text>
<text class="t" x="660.500" y="924" textLength="138" lengthAdjust="spacingAndGlyphs">LR Standard Error</text>

<text class="t" x="1159.500" y="663" textLength="89" lengthAdjust="spacingAndGlyphs">307405629</text>
<text class="t" x="1195.500" y="721" textLength="53" lengthAdjust="spacingAndGlyphs">288.60</text>
<text class="t" x="1131.500" y="750" textLength="117" lengthAdjust="spacingAndGlyphs">507.40 (0.51%)</text>
<text class="t" x="1131.500" y="779" textLength="117" lengthAdjust="spacingAndGlyphs">0.51% (507.40)</text>
<text class="t" x="1215.500" y="837" textLength="33" lengthAdjust="spacingAndGlyphs">9.35</text>
<text class="t" x="1216.500" y="866" textLength="32" lengthAdjust="spacingAndGlyphs">1.96</text>
<text class="t" x="1215.500" y="895" textLength="33" lengthAdjust="spacingAndGlyphs">0.76</text>
<text class="t" x="1195.500" y="924" textLength="53" lengthAdjust="spacingAndGlyphs">243.12</text>

<text class="t" x="1290" y="663" textLength="67" lengthAdjust="spacingAndGlyphs">Symbols</text>
<text class="t" x="1290" y="721" textLength="216" lengthAdjust="spacingAndGlyphs">Equity Drawdown Absolute</text>
<text class="t" x="1290" y="750" textLength="211" lengthAdjust="spacingAndGlyphs">Equity Drawdown Maximal</text>
<text class="t" x="1290" y="779" textLength="205" lengthAdjust="spacingAndGlyphs">Equity Drawdown Relative</text>
<text class="t" x="1290" y="837" textLength="99" lengthAdjust="spacingAndGlyphs">Margin Level</text>
<text class="t" x="1290" y="866" textLength="60" lengthAdjust="spacingAndGlyphs">Z-Score</text>
<text class="t" x="1290" y="895" textLength="117" lengthAdjust="spacingAndGlyphs">OnTester result</text>

<text class="t" x="1873" y="663">1</text>
<text class="t" x="1828.600" y="721" textLength="53" lengthAdjust="spacingAndGlyphs">347.20</text>
<text class="t" x="1749.600" y="750" textLength="132" lengthAdjust="spacingAndGlyphs">1 101.80 (1.09%)</text>
<text class="t" x="1749.600" y="779" textLength="132" lengthAdjust="spacingAndGlyphs">1.09% (1 101.80)</text>
<text class="t" x="1803.600" y="837" textLength="78" lengthAdjust="spacingAndGlyphs">4982.64%</text>
<text class="t" x="1767.600" y="866" textLength="114" lengthAdjust="spacingAndGlyphs">-0.39 (30.35%)</text>
<text class="t" x="1872" y="895">0</text>
</g>
</g>

<!-- watermark -->
<text x="1498.500" y="877" font-size="28" fill="#808080" fill-opacity=".55" textLength="235" lengthAdjust="spacingAndGlyphs">Activate Windows</text>
<text x="1498" y="908" font-size="20" fill="#808080" fill-opacity=".5" textLength="342" lengthAdjust="spacingAndGlyphs">Go to Settings to activate Windows.</text>

<!-- scrollbar -->
<rect x="1888" y="612" width="23" height="311" fill="#f8f8f8"/>
<rect x="1889" y="638" width="22" height="34" fill="#cdcdcd"/>
<path d="M1896 630L1902 624L1908 630" fill="none" stroke="#555" stroke-width="2"/>
<path d="M1896 908L1902 914L1908 908" fill="none" stroke="#555" stroke-width="2"/>

<!-- bottom tab strip -->
<rect x="24" y="923" width="281" height="1" fill="#222"/>
<rect x="398" y="923" width="1513" height="1" fill="#222"/>
<rect x="24" y="924" width="1" height="33" fill="#b4b4b4"/>
<path d="M305.500 923V952.500H398.500V923" fill="#fff" stroke="#222" stroke-width="1"/>
<path d="M130.500 927V952M224.500 927V952M477.500 927V952M563.500 927V952" stroke="#8a8a8a" stroke-width="1" fill="none"/>
<text class="g" x="42.500" y="945" textLength="73" lengthAdjust="spacingAndGlyphs">Overview</text>
<text class="g" x="145" y="945" textLength="63" lengthAdjust="spacingAndGlyphs">Settings</text>
<text class="g" x="240" y="945" textLength="48" lengthAdjust="spacingAndGlyphs">Inputs</text>
<text class="t" x="320" y="945" textLength="63" lengthAdjust="spacingAndGlyphs">Backtest</text>
<text class="g" x="414" y="945" textLength="47" lengthAdjust="spacingAndGlyphs">Graph</text>
<text class="g" x="492.500" y="945" textLength="55" lengthAdjust="spacingAndGlyphs">Agents</text>
<text class="g" x="578" y="945" textLength="56" lengthAdjust="spacingAndGlyphs">Journal</text>
<text class="t" x="1632" y="948" textLength="151" lengthAdjust="spacingAndGlyphs">00:17:29 / 00:17:31</text>
<rect x="1800" y="926" width="111" height="27" fill="#9ccb62"/>
<text class="t" x="1838" y="947" textLength="36" lengthAdjust="spacingAndGlyphs">Start</text>

<!-- bottom edge -->
<rect x="0" y="961" width="1911" height="1" fill="#a8a8a8"/>
<rect x="0" y="963" width="71" height="3" fill="#111"/>
<rect x="71" y="963" width="433" height="3" fill="#e4e4e4"/>
<rect x="504" y="963" width="824" height="3" fill="#111"/>
<rect x="1328" y="963" width="583" height="3" fill="#111"/>
</svg>
</body></html>
